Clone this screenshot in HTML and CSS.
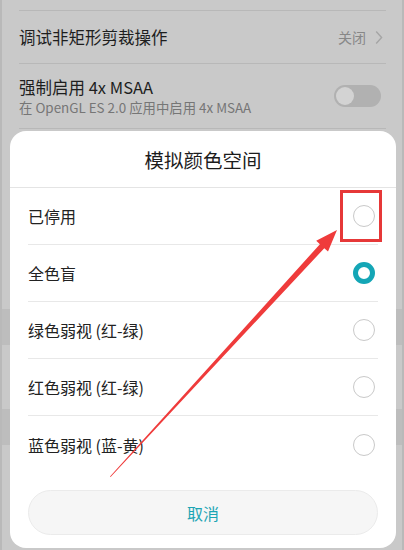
FILE: index.html
```html
<!DOCTYPE html>
<html lang="zh-CN">
<head>
<meta charset="utf-8">
<title>模拟颜色空间</title>
<link rel="stylesheet" href="styles.css">
</head>
<body>
<div class="screen">
  <div class="settings">
    <div class="divider top-div"></div>
    <div class="set-row">
      <span class="set-title">调试非矩形剪裁操作</span>
      <span class="set-value">关闭
        <svg class="chev" width="8" height="15" viewBox="0 0 8 15"><path d="M1.2 1.5 L6.6 7.5 L1.2 13.5" fill="none" stroke="#a5a5a5" stroke-width="1.4"/></svg>
      </span>
    </div>
    <div class="divider"></div>
    <div class="set-row tall">
      <div class="set-text">
        <div class="set-title">强制启用 4x MSAA</div>
        <div class="set-sub">在 OpenGL ES 2.0 应用中启用 4x MSAA</div>
      </div>
      <div class="toggle"><div class="knob"></div></div>
    </div>
    <div class="divider"></div>
    <div class="spacer1"></div>
    <div class="band"></div>
    <div class="spacer2"></div>
    <div class="band"></div>
  </div>

  <div class="dialog">
    <div class="dlg-title">模拟颜色空间</div>
    <div class="dlg-list">
      <div class="opt"><span>已停用</span><span class="radio"></span></div>
      <div class="opt"><span>全色盲</span><span class="radio on"></span></div>
      <div class="opt"><span>绿色弱视 (红-绿)</span><span class="radio"></span></div>
      <div class="opt"><span>红色弱视 (红-绿)</span><span class="radio"></span></div>
      <div class="opt last"><span>蓝色弱视 (蓝-黄)</span><span class="radio"></span></div>
    </div>
    <div class="cancel">取消</div>
  </div>

  <div class="mark-box"></div>
  <svg class="arrow" width="404" height="550" viewBox="0 0 404 550">
    <polygon points="110,476.5 319.9,244.2 316.2,240.8 337,230 328,251.6 324.3,248.2 110.6,476.9" fill="#ef3b3b"/>
  </svg>
</div>
</body>
</html>
```

FILE: styles.css
```css
* { box-sizing: border-box; }
html, body { margin: 0; padding: 0; }
body {
  width: 404px;
  height: 550px;
  overflow: hidden;
  font-family: "Noto Sans CJK SC", "Noto Sans", sans-serif;
  background: #c9c9c9;
}
.screen {
  position: relative;
  width: 404px;
  height: 550px;
  background: #c9c9c9;
  border-left: 2px solid #b9b9b9;
  border-right: 2px solid #b9b9b9;
}
.settings {
  padding: 10px 0 0 0;
}
.divider {
  height: 1px;
  background: #b8b8b8;
  margin: 0 16px 0 17px;
}
.set-row {
  height: 52px;
  display: flex;
  align-items: center;
  justify-content: space-between;
  padding: 0 19px 0 17px;
}
.set-row.tall { height: 64px; padding-top: 0; }
.set-title {
  font-size: 16.5px;
  color: #1e1e1e;
  line-height: 22px;
}
.set-sub {
  font-size: 13.4px;
  color: #767676;
  line-height: 19px;
}
.set-value {
  display: flex;
  align-items: center;
  gap: 9px;
  font-size: 14px;
  color: #878787;
}
.toggle {
  width: 47px;
  height: 22px;
  border-radius: 11px;
  background: #b1b1b1;
  position: relative;
  margin-right: 2px;
}
.knob {
  position: absolute;
  left: 2px;
  top: 2px;
  width: 18px;
  height: 18px;
  border-radius: 50%;
  background: #d3d3d3;
}
.spacer1 { height: 180px; }
.band { height: 36px; background: #bdbdbd; }
.spacer2 { height: 64px; }

.dialog {
  position: absolute;
  left: 8px;
  top: 131px;
  width: 386px;
  height: 417px;
  background: #ffffff;
  border-radius: 16px;
  display: flex;
  flex-direction: column;
}
.dlg-title {
  flex-shrink: 0;
  height: 57px;
  display: flex;
  align-items: center;
  justify-content: center;
  font-size: 19.5px;
  color: #1c1c1c;
  border-bottom: 1px solid #e4e4e4;
  padding-top: 1px;
}
.dlg-list {
  flex-shrink: 0;
  padding: 0 18px;
}
.opt {
  height: 57px;
  display: flex;
  align-items: center;
  justify-content: space-between;
  font-size: 16px;
  color: #222222;
  border-bottom: 1px solid #e8e8e8;
}
.opt.last { border-bottom: none; }
.radio {
  width: 22px;
  height: 22px;
  border-radius: 50%;
  border: 1px solid #c9c9c9;
  margin-right: 3px;
}
.radio.on {
  border: 5px solid #14a6b6;
}
.cancel {
  flex-shrink: 0;
  margin: 17px 18px 0 18px;
  height: 45px;
  border-radius: 23px;
  background: #f6f6f6;
  border: 1px solid #ebebeb;
  display: flex;
  align-items: center;
  justify-content: center;
  font-size: 16px;
  color: #1ca5b4;
}
.mark-box {
  position: absolute;
  left: 338px;
  top: 190px;
  width: 42px;
  height: 52px;
  border: 3px solid #e63838;
}
.arrow {
  position: absolute;
  left: -2px;
  top: 0;
}
```
